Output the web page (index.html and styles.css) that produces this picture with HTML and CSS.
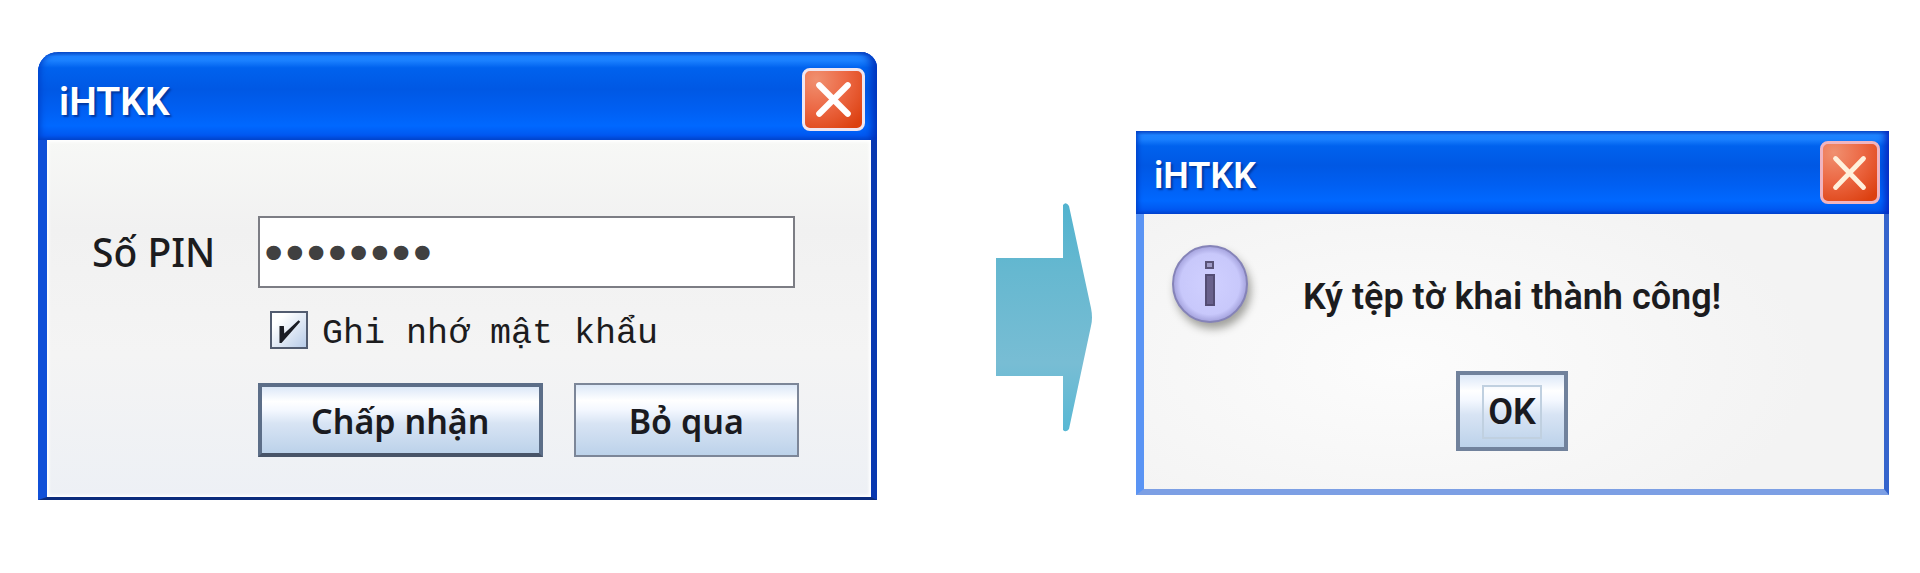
FILE: index.html
```
<!DOCTYPE html>
<html lang="vi">
<head>
<meta charset="utf-8">
<meta name="viewport" content="width=device-width, initial-scale=1">
<title>iHTKK</title>
<link rel="stylesheet" href="styles.css">
</head>
<body>
<main class="steps">
  <section class="window pin-window" aria-labelledby="pin-title">
    <header class="titlebar">
      <h1 class="title" id="pin-title">iHTKK</h1>
      <button class="close" type="button" aria-label="Đóng">
        <svg viewBox="0 0 56 56" aria-hidden="true"><path d="M14 14L42 42M42 14L14 42"/></svg>
      </button>
    </header>
    <form class="pin-form">
      <label class="pin-label" for="pin">Số PIN</label>
      <input class="pin-input" id="pin" type="password" value="12345678">
      <div class="remember">
        <input class="check" id="remember" type="checkbox" checked>
        <label class="check-label" for="remember">Ghi nhớ mật khẩu</label>
      </div>
      <div class="actions">
        <button class="btn btn-default" type="button">Chấp nhận</button>
        <button class="btn" type="button">Bỏ qua</button>
      </div>
    </form>
  </section>

  <svg class="arrow" viewBox="0 0 96 229" aria-hidden="true">
    <defs>
      <linearGradient id="arrow-fill" x1="0" y1="0" x2="0" y2="1">
        <stop offset="0" stop-color="#52b3cf"/>
        <stop offset=".3" stop-color="#66b8d0"/>
        <stop offset=".7" stop-color="#78bdd4"/>
        <stop offset="1" stop-color="#58b8d4"/>
      </linearGradient>
    </defs>
    <path d="M0 55H67V2Q70-2 73 3L95 105Q97 115 95 123L73 226Q70 230 67 227V173H0Z" fill="url(#arrow-fill)"/>
  </svg>

  <section class="window done-window" aria-labelledby="done-title">
    <header class="titlebar">
      <h2 class="title" id="done-title">iHTKK</h2>
      <button class="close" type="button" aria-label="Đóng">
        <svg viewBox="0 0 56 56" aria-hidden="true"><path d="M13 13L42 43M42 13L13 43"/></svg>
      </button>
    </header>
    <div class="message">
      <svg class="info" viewBox="0 0 78 80" aria-hidden="true">
        <defs>
          <radialGradient id="info-fill">
            <stop offset="0" stop-color="#d0d0ff"/>
            <stop offset=".8" stop-color="#c8c8fb"/>
            <stop offset="1" stop-color="#a3a1dc"/>
          </radialGradient>
        </defs>
        <ellipse cx="38" cy="39" rx="37" ry="38" fill="url(#info-fill)" stroke="#8583b8" stroke-width="2"/>
        <path d="M34 17h7v6h-7z" fill="#a09cc8" stroke="#595377" stroke-width="2"/>
        <path d="M34 30h8v30h-8z" fill="#69618c" stroke="#544d74" stroke-width="2"/>
      </svg>
      <p class="message-text">Ký tệp tờ khai thành công!</p>
    </div>
    <div class="confirm">
      <button class="btn btn-default btn-ok" type="button"><span class="focus">OK</span></button>
    </div>
  </section>
</main>
</body>
</html>
```
FILE: styles.css
```
* { box-sizing: border-box; }

body {
  margin: 0;
  background: #fff;
  color: #1c1c1e;
  font-family: "Noto Sans", sans-serif;
}

.steps {
  display: grid;
  grid-template-columns: 839fr 215px 44px 753fr;
  align-items: start;
  padding: 52px 31px 52px 38px;
}

.window {
  border-style: solid;
  border-top: 0;
}

.titlebar {
  display: flex;
  align-items: center;
  justify-content: space-between;
  background: linear-gradient(#0a50c8 0, #1e84ff 5%, #1a80ff 10%, #0062ee 18%, #0058e4 42%, #005ff2 65%, #0068ff 84%, #0058f0 95%, #0048d0 100%);
}

.title {
  margin: 0;
  padding-top: 6px;
  color: #fff;
  font: 600 39px/48px Roboto, sans-serif;
  text-shadow: 2px 2px 2px #0038a0;
}

.close {
  display: block;
  width: 63px;
  height: 63px;
  padding: 0;
  border: 3px solid #f0e6f0;
  border-radius: 8px;
  background: radial-gradient(circle at 20% 15%, #f09070, #ec6844 45%, #dc4010 90%);
}

.close svg {
  display: block;
  width: 100%;
  fill: none;
  stroke: #fff;
  stroke-width: 6;
  stroke-linecap: round;
}

.pin-window {
  border-width: 0 6px 3px 9px;
  border-color: transparent #0838b0 #0c2c7c #1050d8;
  border-radius: 20px 16px 0 0;
}

.pin-window .titlebar {
  height: 88px;
  margin: 0 -6px 0 -9px;
  padding: 6px 12px 0 21px;
  border-radius: 20px 16px 0 0;
  box-shadow: inset 5px 0 6px -3px #0040c8, inset -9px 0 9px -4px #0030b8;
}

.pin-form {
  display: grid;
  grid-template-columns: 166px 1fr;
  align-items: center;
  padding: 76px 72px 40px 45px;
  background: linear-gradient(#f7f8f6, #f1f1f1 25%, #f4f4f4 60%, #edf0f5);
  box-shadow: inset 0 0 3px 2px #fff;
}

.pin-label {
  font-size: 39px;
  font-weight: 500;
  line-height: 48px;
}

.pin-input {
  width: calc(100% - 4px);
  height: 72px;
  padding: 2px 3px 0;
  border: 2px solid #7c7d84;
  background: #fff;
  color: #404040;
  font: 36px "DejaVu Sans", sans-serif;
  -webkit-text-stroke: 4px #404040;
}

.remember {
  grid-column: 2;
  display: flex;
  align-items: center;
  gap: 14px;
  margin: 17px 0 28px 12px;
  line-height: 50px;
}

.check {
  width: 38px;
  height: 38px;
  margin: 0;
  appearance: none;
  border: 2px solid #525c70;
  background: linear-gradient(135deg, #fff 20%, #b8cce8);
}

.check:checked::before {
  content: "";
  display: block;
  height: 100%;
  background: #1a1c24;
  clip-path: polygon(22% 38%, 35% 38%, 36% 60%, 78% 21%, 83% 26%, 28% 88%, 22% 88%);
}

.check-label {
  padding-top: 8px;
  font-family: "Liberation Mono", monospace;
  font-size: 35px;
  line-height: 42px;
}

.actions {
  grid-column: 2;
  display: grid;
  grid-template-columns: 284fr 225fr;
  gap: 31px;
}

.btn {
  height: 74px;
  padding: 2px 0 0;
  border: 2px solid #7c8698;
  background: linear-gradient(#dce8f8 0, #fff 22%, #f4f8ff 35%, #d8e4f4 55%, #bcd2ea);
  color: #1a1a20;
  font: 600 34px/44px "Noto Sans", sans-serif;
}

.btn-default {
  border: 4px solid #5c6e88;
  border-bottom-color: #485468;
}

.arrow {
  width: 96px;
  margin-top: 151px;
  justify-self: end;
}

.done-window {
  grid-column: 4;
  margin-top: 79px;
  border-width: 0 5px 6px 8px;
  border-color: transparent #3564cc #7c9fe4 #5a94f4;
  background: radial-gradient(ellipse at 35% 65%, #fcfcfc, #f3f3f3 60%);
}

.done-window .titlebar {
  height: 83px;
  margin: 0 -5px 0 -8px;
  padding: 0 9px 0 18px;
  box-shadow: inset 5px 0 5px -3px #0040c8, inset -7px 0 7px -3px #0828c0;
}

.done-window .title {
  font-size: 36px;
}

.done-window .close {
  width: 60px;
  border-color: #f0b4c0;
}

.done-window .close svg {
  stroke: #fff0dc;
  stroke-width: 5;
}

.message {
  display: flex;
  align-items: center;
  gap: 53px;
  padding: 31px 28px 0;
}

.info {
  flex: none;
  width: 78px;
  height: 80px;
  filter: drop-shadow(3px 6px 4px #a0a09c);
}

.message-text {
  margin: 0;
  padding-top: 24px;
  font: 600 36px/44px Roboto, sans-serif;
}

.confirm {
  display: flex;
  justify-content: center;
  padding: 46px 4px 38px 0;
}

.btn-ok {
  width: 112px;
  height: 80px;
  border-color: #71829c;
}

.focus {
  display: block;
  margin: 0 22px;
  border: 2px solid #c0d0e0;
  font: 600 36px/50px Roboto, sans-serif;
}
```
